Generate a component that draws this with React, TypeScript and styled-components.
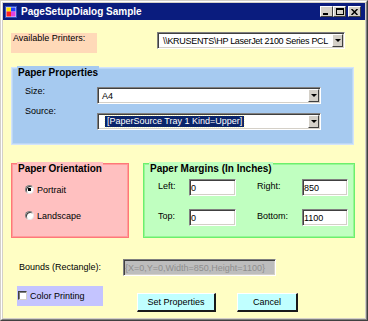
import React from "react";
import styled, { createGlobalStyle } from "styled-components";

const GlobalStyle = createGlobalStyle`
  html, body { margin: 0; padding: 0; background: #d4d0c8; }
  body { font-family: "Liberation Sans", Arial, sans-serif; font-size: 9px; color: #000; }
  * { box-sizing: border-box; }
`;

const S = {
  Window: styled.div`
    width: 368px;
    height: 321px;
    display: flex;
    border-style: solid;
    border-width: 1px;
    border-color: #d4d0c8 #404040 #404040 #d4d0c8;
  `,
  Frame: styled.div`
    flex: 1;
    display: flex;
    flex-direction: column;
    padding: 1px;
    background: #d4d0c8;
    border-style: solid;
    border-width: 1px;
    border-color: #fff #808080 #808080 #fff;
  `,
  TitleBar: styled.div`
    height: 17px;
    flex-shrink: 0;
    display: flex;
    align-items: center;
    padding: 0 4px 0 2px;
    background: #0a1c7e;
  `,
  Title: styled.span`
    margin-left: 4px;
    flex: 1;
    color: #fff;
    font-weight: bold;
    font-size: 10px;
  `,
  CaptionButton: styled.div<{ $gap?: number }>`
    width: 13px;
    height: 11px;
    margin-left: ${p => p.$gap ?? 0}px;
    display: flex;
    align-items: center;
    justify-content: center;
    background: #d4d0c8;
    border-style: solid;
    border-width: 1px;
    border-color: #fff #404040 #404040 #fff;
  `,
  Content: styled.div`
    flex: 1;
    display: flex;
    flex-direction: column;
    padding-left: 8px;
    background: #fffec4;
  `,
  Row: styled.div<{ $top: number; $align?: string }>`
    display: flex;
    align-items: ${p => p.$align ?? "flex-start"};
    margin-top: ${p => p.$top}px;
  `,
  Tinted: styled.div<{ $bg: string; $w: number; $left?: number }>`
    width: ${p => p.$w}px;
    height: 20px;
    margin-left: ${p => p.$left ?? 0}px;
    background: ${p => p.$bg};
  `,
  PeachText: styled.div`
    padding: 0 2px;
    line-height: 11px;
  `,
  Combo: styled.div<{ $w: number; $left?: number }>`
    width: ${p => p.$w}px;
    height: 17px;
    margin-left: ${p => p.$left ?? 0}px;
    display: flex;
    align-items: stretch;
    padding: 1px;
    background: #fff;
    border-style: solid;
    border-width: 1px;
    border-color: #808080 #fff #fff #808080;
    box-shadow: inset 1px 1px 0 #404040, inset -1px -1px 0 #d4d0c8;
  `,
  ComboValue: styled.div<{ $indent: number; $tight?: boolean }>`
    flex: 1;
    display: flex;
    align-items: center;
    padding-left: ${p => p.$indent}px;
    letter-spacing: ${p => (p.$tight ? "-0.3px" : "0")};
    white-space: nowrap;
    overflow: hidden;
  `,
  Selected: styled.span`
    padding: 0 2px;
    line-height: 11px;
    background: #0a246a;
    color: #fff;
    outline: 1px dotted #fffec4;
  `,
  DropButton: styled.div`
    width: 11px;
    flex-shrink: 0;
    display: flex;
    align-items: center;
    justify-content: center;
    background: #d4d0c8;
    border-style: solid;
    border-width: 1px;
    border-color: #fff #404040 #404040 #fff;
    &::after {
      content: "";
      border-left: 3px solid transparent;
      border-right: 3px solid transparent;
      border-top: 3px solid #000;
    }
  `,
  Group: styled.div<{ $bg: string; $line: string; $w: number; $h: number; $pad: number }>`
    width: ${p => p.$w}px;
    height: ${p => p.$h}px;
    display: flex;
    flex-direction: column;
    align-items: flex-start;
    padding-left: ${p => p.$pad}px;
    background: ${p => p.$bg};
    border: 1px solid ${p => p.$line};
    box-shadow: inset 0 0 0 1px ${p => p.$line}80;
  `,
  GroupTitle: styled.div<{ $bg: string; $pad: number }>`
    margin: -2px 0 0 ${p => 5 - p.$pad}px;
    padding: 0 1px;
    line-height: 13px;
    font-size: 10px;
    font-weight: bold;
    background: ${p => p.$bg};
  `,
  PropGrid: styled.div`
    margin-top: 8px;
    display: grid;
    grid-template-columns: 72px 224px;
    grid-auto-rows: 17px;
    row-gap: 9px;
  `,
  Label: styled.div<{ $lift?: number }>`
    line-height: 11px;
    white-space: nowrap;
    margin-top: ${p => -(p.$lift ?? 0)}px;
  `,
  RadioList: styled.div`
    margin-top: 8px;
    display: flex;
    flex-direction: column;
    gap: 13px;
  `,
  RadioRow: styled.label`
    height: 13px;
    display: flex;
    align-items: center;
    gap: 3px;
  `,
  Radio: styled.span<{ $on: boolean }>`
    width: 9px;
    height: 9px;
    border-radius: 50%;
    background: ${p => (p.$on ? "radial-gradient(circle, #000 0 1.6px, #fff 1.9px)" : "#fff")};
    border: 1px solid;
    border-color: #808080 #e8e8e8 #e8e8e8 #808080;
    box-shadow: inset 1px 1px 0 #404040;
  `,
  MarginGrid: styled.div`
    margin-top: 4px;
    display: grid;
    grid-template-columns: 31px 68px 45px 46px;
    grid-auto-rows: 17px;
    row-gap: 13px;
    align-items: center;
  `,
  TextBox: styled.div<{ $w: number; $disabled?: boolean }>`
    width: ${p => p.$w}px;
    height: 17px;
    display: flex;
    align-items: center;
    padding-left: 1px;
    white-space: nowrap;
    overflow: hidden;
    background: ${p => (p.$disabled ? "#bdbdbd" : "#fff")};
    color: ${p => (p.$disabled ? "#8e8e8e" : "#000")};
    border-style: solid;
    border-width: 1px;
    border-color: #808080 #fff #fff #808080;
    box-shadow: inset 1px 1px 0 #404040, inset -1px -1px 0 #d4d0c8;
  `,
  BoundsLabel: styled.div`
    width: 104px;
    margin-left: 8px;
    margin-top: -2px;
  `,
  CheckRow: styled.label`
    height: 100%;
    display: flex;
    align-items: center;
    gap: 3px;
    padding: 0 0 1px 1px;
  `,
  Check: styled.span`
    width: 9px;
    height: 9px;
    background: #fff;
    border-style: solid;
    border-width: 1px;
    border-color: #404040 #d4d0c8 #d4d0c8 #404040;
    box-shadow: inset 1px 1px 0 #808080;
  `,
  Button: styled.button<{ $w: number; $left: number }>`
    width: ${p => p.$w}px;
    height: 19px;
    margin: 7px 0 0 ${p => p.$left}px;
    padding: 0;
    font-family: inherit;
    font-size: 9px;
    color: #000;
    background: #c0ffff;
    border-style: solid;
    border-width: 1px 2px 2px 1px;
    border-color: #fff #1a1a1a #1a1a1a #fff;
  `,
};

const AppIcon = () => (
  <svg width="12" height="12" viewBox="0 0 12 12">
    <rect x="0" y="0" width="12" height="12" fill="#d8d8f0" />
    <rect x="0.5" y="0.5" width="11" height="11" fill="none" stroke="#3050c0" />
    <rect x="1.5" y="1.5" width="4.5" height="4" fill="#ffe000" />
    <rect x="6" y="1.5" width="4.5" height="4" fill="#2040ff" />
    <rect x="1.5" y="5.5" width="4.5" height="5" fill="#ff2020" />
    <rect x="6" y="5.5" width="4.5" height="5" fill="#e040e0" />
  </svg>
);

const Combo = ({ w, left, indent, value, selected, tight }: { w: number; left?: number; indent: number; value: string; selected?: boolean; tight?: boolean }) => (
  <S.Combo $w={w} $left={left}>
    <S.ComboValue $indent={indent} $tight={tight}>{selected ? <S.Selected>{value}</S.Selected> : value}</S.ComboValue>
    <S.DropButton />
  </S.Combo>
);

const BLUE = "#a6caf0";
const RED = "#ffc0c0";
const GREEN = "#c0ffc0";

export default function App() {
  return (
    <>
      <GlobalStyle />
      <S.Window>
        <S.Frame>
          <S.TitleBar>
            <AppIcon />
            <S.Title>PageSetupDialog Sample</S.Title>
            <S.CaptionButton>
              <svg width="7" height="7" viewBox="0 0 7 7"><rect x="0" y="5" width="5" height="2" fill="#000" /></svg>
            </S.CaptionButton>
            <S.CaptionButton>
              <svg width="8" height="7" viewBox="0 0 8 7"><rect x="0.5" y="0.5" width="7" height="6" fill="none" stroke="#000" /><rect x="0" y="1" width="8" height="1" fill="#000" /></svg>
            </S.CaptionButton>
            <S.CaptionButton $gap={2}>
              <svg width="7" height="6" viewBox="0 0 7 6"><path d="M0.5 0 L6.5 6 M6.5 0 L0.5 6" stroke="#000" strokeWidth="1.5" /></svg>
            </S.CaptionButton>
          </S.TitleBar>
          <S.Content>
            <S.Row $top={12}>
              <S.Tinted $bg="#ffd9b8" $w={86} style={{ marginTop: 1 }}>
                <S.PeachText>Available Printers:</S.PeachText>
              </S.Tinted>
              <Combo w={188} left={60} indent={4} tight value="\\KRUSENTS\HP LaserJet 2100 Series PCL" />
            </S.Row>

            <S.Row $top={14}>
              <S.Group $bg={BLUE} $line="#d2e4fa" $w={343} $h={78} $pad={13}>
                <S.GroupTitle $bg={BLUE} $pad={13}>Paper Properties</S.GroupTitle>
                <S.PropGrid>
                  <S.Label $lift={1}>Size:</S.Label>
                  <Combo w={224} indent={3} value="A4" />
                  <S.Label $lift={7}>Source:</S.Label>
                  <Combo w={224} indent={6} value="[PaperSource Tray 1 Kind=Upper]" selected />
                </S.PropGrid>
              </S.Group>
            </S.Row>

            <S.Row $top={18} style={{ gap: 14 }}>
              <S.Group $bg={RED} $line="#ff7878" $w={118} $h={75} $pad={13}>
                <S.GroupTitle $bg={RED} $pad={13}>Paper Orientation</S.GroupTitle>
                <S.RadioList>
                  <S.RadioRow><S.Radio $on={true} />Portrait</S.RadioRow>
                  <S.RadioRow><S.Radio $on={false} />Landscape</S.RadioRow>
                </S.RadioList>
              </S.Group>
              <S.Group $bg={GREEN} $line="#6cf06c" $w={212} $h={75} $pad={14}>
                <S.GroupTitle $bg={GREEN} $pad={14}>Paper Margins (In Inches)</S.GroupTitle>
                <S.MarginGrid>
                  <S.Label $lift={2}>Left:</S.Label>
                  <S.TextBox $w={47}>0</S.TextBox>
                  <S.Label $lift={2}>Right:</S.Label>
                  <S.TextBox $w={46}>850</S.TextBox>
                  <S.Label $lift={2}>Top:</S.Label>
                  <S.TextBox $w={47}>0</S.TextBox>
                  <S.Label $lift={2}>Bottom:</S.Label>
                  <S.TextBox $w={46}>1100</S.TextBox>
                </S.MarginGrid>
              </S.Group>
            </S.Row>

            <S.Row $top={21} $align="center">
              <S.BoundsLabel>Bounds (Rectangle):</S.BoundsLabel>
              <S.TextBox $w={153} $disabled>{"{X=0,Y=0,Width=850,Height=1100}"}</S.TextBox>
            </S.Row>

            <S.Row $top={10}>
              <S.Tinted $bg="#c4c4ff" $w={86} $left={6}>
                <S.CheckRow><S.Check />Color Printing</S.CheckRow>
              </S.Tinted>
              <S.Button $w={79} $left={34}>Set Properties</S.Button>
              <S.Button $w={61} $left={21}>Cancel</S.Button>
            </S.Row>
          </S.Content>
        </S.Frame>
      </S.Window>
    </>
  );
}
